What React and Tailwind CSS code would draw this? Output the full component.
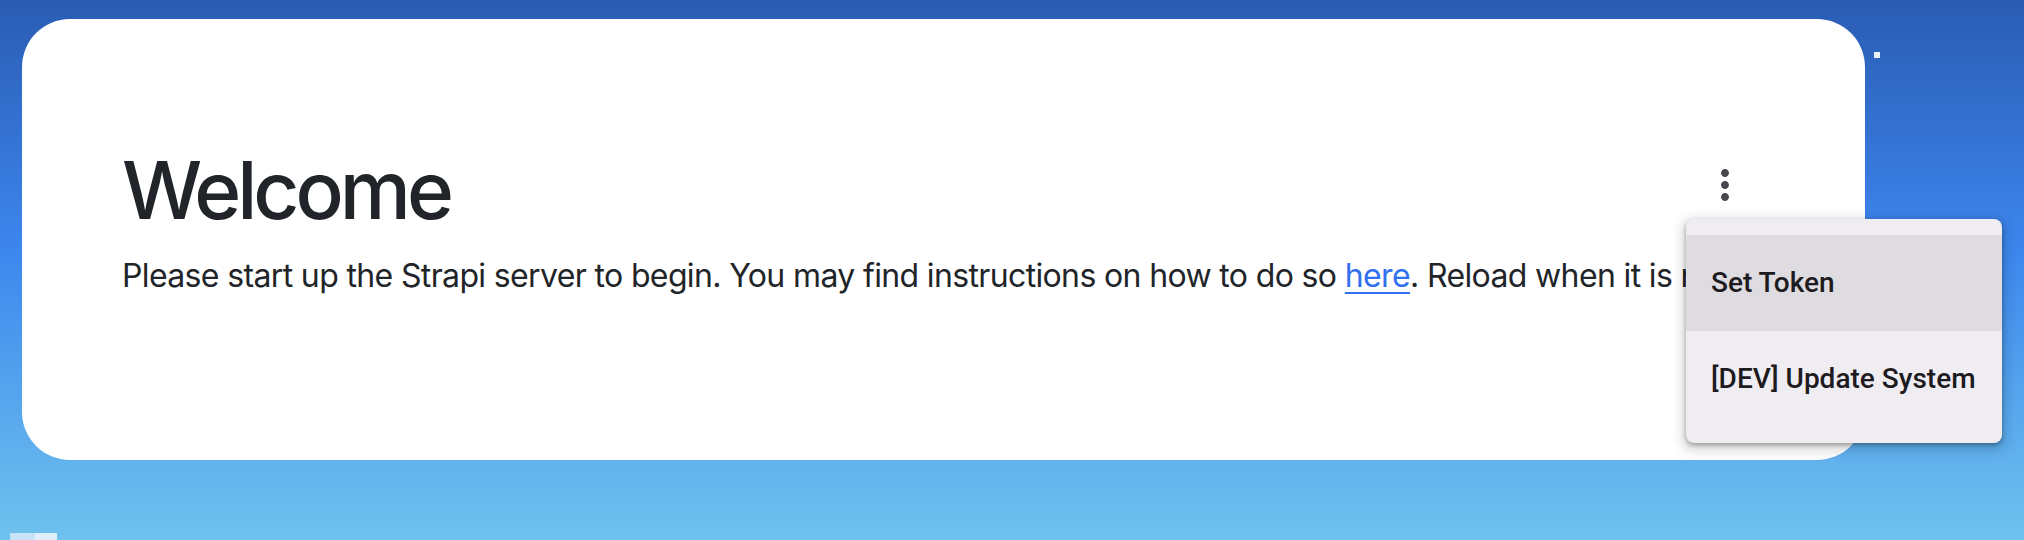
import React from "react";

const menuItems = [
    { label: "Set Token", active: true },
    { label: "[DEV] Update System", active: false },
];

export default function App() {
    return (
        <div className="relative h-[540px] w-[2024px] overflow-hidden bg-[linear-gradient(180deg,#2a5cb3_0%,#3d86ee_46%,#6fc2ee_100%)]">
            {/* CARD */}
            <div className="ml-[22px] mt-[19px] h-[441px] w-[1843px] rounded-[48px] bg-white px-[100px] pt-[123px] text-[#212529] font-['Inter','Liberation_Sans',sans-serif]">
                <div className="flex items-start justify-between">
                    <h1 className="text-[80px] leading-[96px] font-medium tracking-[-0.05em]">Welcome</h1>
                    <button className="mt-[3px] flex h-[80px] w-[80px] items-center justify-center rounded-full text-[#49454f]">
                        <svg viewBox="0 0 24 24" width="48" height="48" fill="currentColor">
                            <path d="M12 8c1.1 0 2-.9 2-2s-.9-2-2-2-2 .9-2 2 .9 2 2 2zm0 2c-1.1 0-2 .9-2 2s.9 2 2 2 2-.9 2-2-.9-2-2-2zm0 6c-1.1 0-2 .9-2 2s.9 2 2 2 2-.9 2-2-.9-2-2-2z" />
                        </svg>
                    </button>
                </div>
                <p className="mt-[14px] whitespace-nowrap text-[32px] leading-[48px] tracking-[-0.02em]">
                    Please start up the Strapi server to begin. You may find instructions on how to do so{" "}
                    <a href="#" className="text-[#2f6ff0] underline underline-offset-[5px] decoration-2">here</a>. Reload when it is ready.
                </p>
            </div>

            {/* MENU */}
            <div className="absolute left-[1686px] top-[219px] w-[316px] rounded-[8px] bg-[#efedf1] py-[16px] shadow-[0_2px_4px_rgba(0,0,0,0.3),0_4px_12px_4px_rgba(0,0,0,0.15)] font-['Roboto',sans-serif]">
                {menuItems.map((item) => (
                    <div
                        key={item.label}
                        className={`flex h-[96px] items-center px-[25px] text-[28px] leading-[40px] font-medium text-[#1d1b20] ${item.active ? "bg-[#dedce0]" : ""}`}
                    >
                        {item.label}
                    </div>
                ))}
            </div>

            {/* stray bits */}
            <div className="absolute left-[1874px] top-[52px] h-[6px] w-[6px] bg-white/90 blur-[0.5px]" />
            <div className="absolute left-[10px] top-[533px] h-[7px] w-[25px] bg-[#c8e4f8]" />
            <div className="absolute left-[35px] top-[533px] h-[7px] w-[22px] bg-[#dff0fc]" />
        </div>
    );
}
